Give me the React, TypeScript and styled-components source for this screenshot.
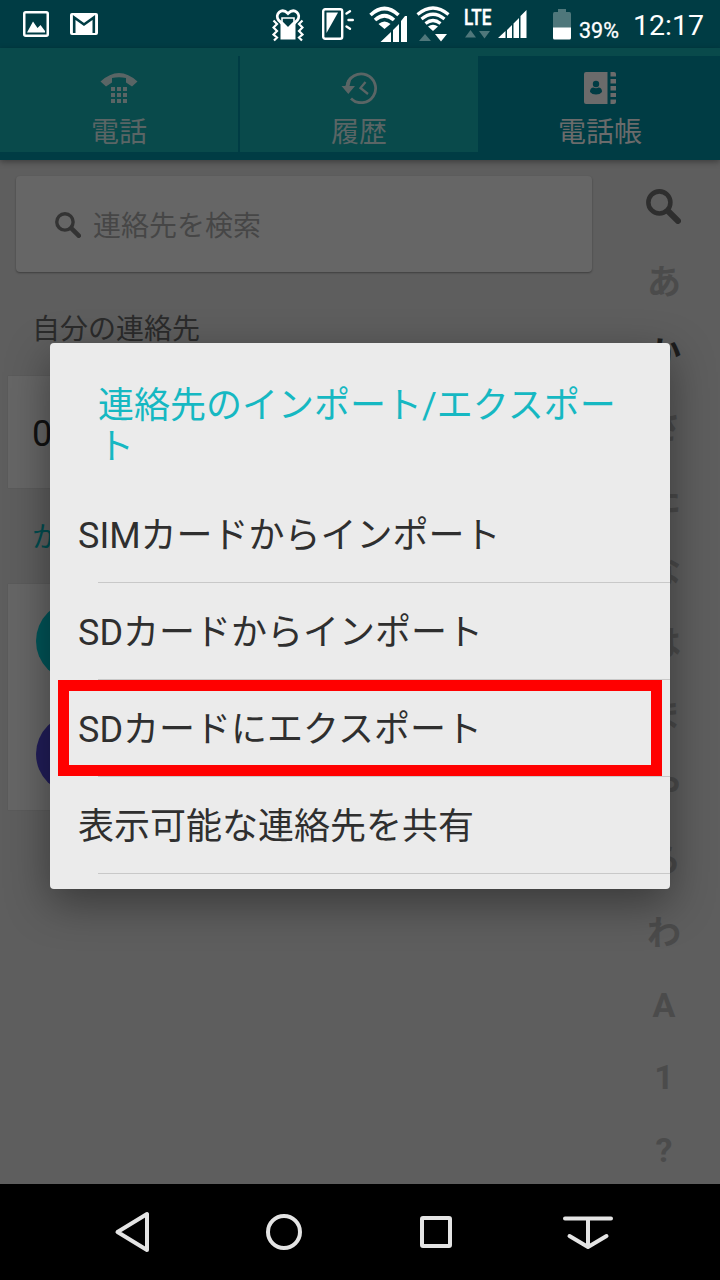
import React from 'react';
import styled, { createGlobalStyle } from 'styled-components';

const menuItems = [
    'SIMカードからインポート',
    'SDカードからインポート',
    'SDカードにエクスポート',
    '表示可能な連絡先を共有',
];

const kanaLetters = ['あ', 'か', 'さ', 'た', 'な', 'は', 'ま', 'や', 'ら', 'わ'];
const otherLetters = ['A', '1', '?'];

const StatusBar = () => (
    <Status>
        <StatusIcon width="26" height="26" viewBox="0 0 26 26" $left={23} $top={11}>
            <rect x="1.25" y="1.25" width="23.5" height="23.5" rx="1.5" stroke="#fff" strokeWidth="2.5" fill="none" />
            <path d="M4 21.5 L10 10.5 L14.5 17 L17.5 14 L22 20 V21.5 Z" fill="#fff" />
        </StatusIcon>
        <StatusIcon width="28" height="22" viewBox="0 0 28 22" $left={21} $top={13}>
            <rect width="28" height="22" rx="2" fill="#fff" />
            <path d="M4.2 20 V4.5 L14 11.5 L23.8 4.5 V20" stroke="#003c44" strokeWidth="2.6" fill="none" />
        </StatusIcon>
        <StatusIcon width="32" height="34" viewBox="0 0 32 34" $left={174} $top={8}>
            <path d="M8.5 15 H23.5 V31.5 H8.5 Z" fill="#fff" />
            <path d="M16 21.5 L6.5 12 C2.5 6 9.5 -1 16 5.5 C22.5 -1 29.5 6 25.5 12 Z" fill="#003c44" stroke="#fff" strokeWidth="2.8" />
            <path d="M10 10 H22 V14 L16 20 L10 14 Z" fill="#003c44" stroke="#fff" strokeWidth="1.6" />
            <path d="M1.5 12.5 L5 16 L1.5 19.5 L5 23 L1.5 26.5 L5 29.5 L2 32.5 M30.5 12.5 L27 16 L30.5 19.5 L27 23 L30.5 26.5 L27 29.5 L30 32.5" stroke="#fff" strokeWidth="2.2" fill="none" />
        </StatusIcon>
        <StatusIcon width="32" height="32" viewBox="0 0 32 32" $left={18} $top={8}>
            <rect x="1.2" y="1.2" width="19" height="29.6" rx="2" stroke="#fff" strokeWidth="2.4" fill="none" />
            <path d="M4.5 4.5 H16 L4.5 25 Z" fill="#fff" />
            <path d="M24.5 5.5 L28 3.2 M26.5 12 H30.8 M24.5 18.5 L28 20.8" stroke="#fff" strokeWidth="2.4" strokeLinecap="round" />
        </StatusIcon>
        <StatusIcon width="40" height="36" viewBox="0 0 40 36" $left={15} $top={6}>
            <path d="M1.5 9 Q15.5 -4 29.5 9 M6 14 Q15.5 5.5 25 14" stroke="#fff" strokeWidth="3.6" fill="none" />
            <path d="M9.5 18 Q15.5 13 21.5 18 L15.5 23 Z" fill="#fff" />
            <path d="M11.5 36 L22 26 V36 Z M24 24 L30 18 V36 H24 Z M32 15 L36 10 H38 V36 H32 Z" fill="#fff" />
        </StatusIcon>
        <StatusIcon width="34" height="36" viewBox="0 0 34 36" $left={7} $top={6}>
            <path d="M1.5 8.5 Q17 -4.5 32.5 8.5 M5.5 13 Q17 3.5 28.5 13 M9.5 17.5 Q17 11.5 24.5 17.5" stroke="#fff" strokeWidth="3.2" fill="none" />
            <path d="M12 20.5 Q17 17 22 20.5 L17 25 Z" fill="#fff" />
            <path d="M3 35 L9 28 L15 35 Z" fill="#4f777b" />
            <path d="M19 28 H31 L25 35.5 Z" fill="#fff" />
        </StatusIcon>
        <Lte>
            <span>LTE</span>
            <svg width="26" height="9" viewBox="0 0 26 9">
                <path d="M0 7.5 L5.5 0 L11 7.5 Z M14 1 H25 L19.5 8.5 Z" fill="#4f777b" />
            </svg>
        </Lte>
        <StatusIcon width="29" height="28" viewBox="0 0 29 28" $left={6} $top={10}>
            <path d="M0 28 L7.5 21 V28 Z M9 20 L14 15 V28 H9 Z M15.5 13.5 L21 8 V28 H15.5 Z M22.5 6 L28.5 0 V28 H22.5 Z" fill="#fff" />
        </StatusIcon>
        <StatusIcon width="20" height="32" viewBox="0 0 20 32" $left={25} $top={8}>
            <path d="M6 1 H14 V4 H17.5 Q19 4 19 6 V20 H1 V6 Q1 4 2.5 4 H6 Z" fill="#4f777b" />
            <path d="M1 19.5 H19 V30 Q19 31.5 17.5 31.5 H2.5 Q1 31.5 1 30 Z" fill="#fff" />
        </StatusIcon>
        <Percent>39%</Percent>
        <Clock>12:17</Clock>
    </Status>
);

const SearchIcon = ({ size, color }: { size: number; color: string }) => (
    <svg width={size} height={size} viewBox="0 0 34 34">
        <circle cx="13" cy="13" r="10.7" stroke={color} strokeWidth="4.4" fill="none" />
        <path d="M21.5 21.5 L31 31" stroke={color} strokeWidth="6" strokeLinecap="round" />
    </svg>
);

const App = () => {
    return (
        <Screen>
            <GlobalStyle />
            <StatusBar />
            <Tabs>
                <Tab $color="#5a6565">
                    <svg width="38" height="32" viewBox="0 0 38 32">
                        <path d="M.5 9.5 Q19 -7.5 37.5 9.5 L32 14.5 L26 10.5 V6 Q19 4.5 12 6 V10.5 L6 14.5 Z" fill="currentColor" />
                        <path d="M11 15h4v4h-4z M17 15h4v4h-4z M23 15h4v4h-4z M11 21h4v4h-4z M17 21h4v4h-4z M23 21h4v4h-4z M11 27h4v4h-4z M17 27h4v4h-4z M23 27h4v4h-4z" fill="currentColor" />
                    </svg>
                    <span>電話</span>
                </Tab>
                <Tab $color="#5a6565">
                    <svg width="38" height="32" viewBox="0 0 38 32">
                        <path d="M7 14 A14.4 14.4 0 1 1 11 26.5" stroke="currentColor" strokeWidth="2.8" fill="none" />
                        <path d="M1.5 14 H5.5 Q7 6 12 4 L9.5 14 H15 L8.3 22 Z" fill="currentColor" />
                        <path d="M25.5 10 L20.5 16 L28 22" stroke="currentColor" strokeWidth="2.3" fill="none" />
                    </svg>
                    <span>履歴</span>
                </Tab>
                <Tab $active $color="#6b6b6b">
                    <svg width="32" height="32" viewBox="0 0 32 32">
                        <path d="M2 0 H23.5 V32 H2 Q0 32 0 30 V2 Q0 0 2 0 Z" fill="currentColor" />
                        <circle cx="12" cy="12" r="3.2" fill="#003c44" />
                        <path d="M6 20 Q6 15.5 9.5 15.5 Q12 17 14.5 15.5 Q18 15.5 18 20 Q16 22.5 12 22.5 Q8 22.5 6 20 Z" fill="#003c44" />
                        <path d="M26.5 0h3.5q2 0 2 2v2.5h-5.5z M26.5 7h5.5v4.5h-5.5z M26.5 14h5.5v4.5h-5.5z M26.5 21h5.5v4h-5.5z M26.5 27.5h5.5v2.5q0 2-2 2h-3.5z" fill="currentColor" />
                    </svg>
                    <span>電話帳</span>
                </Tab>
            </Tabs>
            <Content>
                <ContactList>
                    <SearchBox>
                        <SearchIcon size={26} color="#333" />
                        <span>連絡先を検索</span>
                    </SearchBox>
                    <SectionTitle $color="#2b2b2b">自分の連絡先</SectionTitle>
                    <Card>
                        <OwnNumber>0</OwnNumber>
                    </Card>
                    <SectionTitle $color="#004d50">か</SectionTitle>
                    <Card>
                        <ContactRow><Avatar $color="#005458" /></ContactRow>
                        <ContactRow><Avatar $color="#211d59" /></ContactRow>
                    </Card>
                </ContactList>
                <IndexRail>
                    <RailItem $shift={0}><SearchIcon size={35} color="#2e2e2e" /></RailItem>
                    {kanaLetters.map((letter) => (
                        <RailItem key={letter} $shift={2} $current={letter === 'か'}>{letter}</RailItem>
                    ))}
                    {otherLetters.map((letter) => (
                        <RailItem key={letter} $shift={7}>{letter}</RailItem>
                    ))}
                </IndexRail>
            </Content>
            <NavBar>
                <svg width="36" height="42" viewBox="0 0 36 42">
                    <path d="M33 3 V39 L3.5 21 Z" />
                </svg>
                <svg width="40" height="40" viewBox="0 0 40 40">
                    <circle cx="20" cy="20" r="16" />
                </svg>
                <svg width="36" height="36" viewBox="0 0 36 36">
                    <rect x="4" y="4" width="28" height="28" rx="1" />
                </svg>
                <svg width="52" height="36" viewBox="0 0 52 36">
                    <path d="M3 4.5 H49 M26 4.5 V32 M7.5 22 L26 33 L44.5 22" />
                </svg>
            </NavBar>
            <Dialog>
                <DialogTitle>連絡先のインポート/エクスポート</DialogTitle>
                {menuItems.map((item) => (
                    <MenuItem key={item}>{item}</MenuItem>
                ))}
                <Highlight />
            </Dialog>
        </Screen>
    );
};

export default App;


const GlobalStyle = createGlobalStyle`
 * {
    box-sizing: border-box;
 }
 body {
    margin: 0;
    background: #5e5e5e;
    font-family: Roboto, "Noto Sans CJK JP", sans-serif;
 }
 svg {
    display: block;
    flex: none;
 }
`
const Screen = styled.div`
 position: relative;
 display: flex;
 flex-direction: column;
 width: 720px;
 height: 1280px;
 overflow: hidden;
`
const Status = styled.div`
 display: flex;
 align-items: flex-start;
 height: 48px;
 background: #003c44;
 color: #fff;
`
const StatusIcon = styled.svg<{ $left: number; $top: number }>`
 margin-left: ${({ $left }) => $left}px;
 margin-top: ${({ $top }) => $top}px;
`
const Lte = styled.div`
 width: 28px;
 margin: 6px 0 0 14px;

 span {
    display: block;
    height: 24px;
    font-size: 22px;
    line-height: 24px;
    font-weight: 500;
    -webkit-text-stroke: 0.4px #fff;
    transform: scaleX(0.78);
    transform-origin: left;
 }
 svg {
    margin-left: 1px;
 }
`
const Percent = styled.span`
 width: 54px;
 margin-left: 7px;
 font-size: 21.5px;
 line-height: 61px;
 -webkit-text-stroke: 0.3px #fff;
`
const Clock = styled.span`
 font-size: 28.5px;
 line-height: 51px;
`
const Tabs = styled.div`
 display: grid;
 grid-template-columns: 240px 238px 242px;
 height: 112px;
 border-top: 8px solid #094a4b;
 border-bottom: 8px solid #003c44;
 background: #003c44;
 box-shadow: 0 2px 6px rgba(0, 0, 0, 0.35);
 z-index: 1;
`
const Tab = styled.div<{ $active?: boolean; $color: string }>`
 display: flex;
 flex-direction: column;
 align-items: center;
 padding-top: 16px;
 padding-left: ${({ $active }) => ($active ? 2 : 0)}px;
 background: ${({ $active }) => ($active ? '#003c44' : '#094a4b')};
 color: ${({ $color }) => $color};
 font-size: 28px;
 line-height: 38px;

 &:first-child {
    border-right: 2px solid #003c44;
 }
 span {
    margin-top: 10px;
 }
`
const Content = styled.div`
 display: flex;
 height: 1024px;
 background: #5e5e5e;
`
const ContactList = styled.div`
 width: 608px;
 padding: 16px 16px 0 8px;
`
const SearchBox = styled.div`
 display: flex;
 align-items: center;
 height: 96px;
 margin-left: 8px;
 padding: 2px 0 0 39px;
 border-radius: 4px;
 background: #666;
 box-shadow: 0 1px 2px rgba(0, 0, 0, 0.35);
 color: #464646;
 font-size: 28px;

 span {
    margin: -2px 0 0 12px;
 }
`
const SectionTitle = styled.div<{ $color: string }>`
 height: 96px;
 padding-left: 24px;
 color: ${({ $color }) => $color};
 font-size: 28px;
 line-height: 100px;

 ${SearchBox} + & {
    height: 104px;
    line-height: 116px;
 }
`
const Card = styled.div`
 background: #666;
 box-shadow: 0 0 1px rgba(0, 0, 0, 0.2);
`
const OwnNumber = styled.div`
 height: 112px;
 padding-left: 24px;
 color: #111;
 font-size: 36px;
 line-height: 116px;
`
const ContactRow = styled.div`
 display: flex;
 align-items: center;
 height: 113px;
 padding-left: 28px;
`
const Avatar = styled.div<{ $color: string }>`
 width: 80px;
 height: 80px;
 border-radius: 50%;
 background: ${({ $color }) => $color};
`
const IndexRail = styled.div`
 display: flex;
 flex-direction: column;
 width: 112px;
 padding-top: 10px;
`
const RailItem = styled.div<{ $current?: boolean; $shift: number }>`
 display: flex;
 align-items: center;
 justify-content: center;
 height: 72.3px;
 padding-top: ${({ $shift }) => $shift}px;
 color: ${({ $current }) => ($current ? '#1d1d1d' : '#4b4b4b')};
 font-size: 34px;
 font-weight: bold;

 &:first-child {
    padding-right: 2px;
 }
`
const NavBar = styled.div`
 display: grid;
 grid-template-columns: repeat(4, 152px);
 justify-content: center;
 align-items: center;
 justify-items: center;
 height: 96px;
 background: #000;

 svg {
    fill: none;
    stroke: #e4e4e4;
    stroke-width: 4;
    stroke-linecap: round;
    stroke-linejoin: round;
 }
`
const Dialog = styled.div`
 position: absolute;
 top: 343px;
 left: 50px;
 z-index: 2;
 width: 620px;
 height: 546px;
 border-radius: 4px;
 background: #ebebeb;
 box-shadow: 0 14px 44px rgba(0, 0, 0, 0.4);
`
const DialogTitle = styled.div`
 height: 143px;
 padding: 43px 48px 0;
 color: #16b8c2;
 font-size: 36px;
 line-height: 41px;
`
const MenuItem = styled.div`
 height: 97px;
 padding: 2px 0 0 28px;
 color: #2f2f2f;
 font-size: 36px;
 line-height: 96px;

 &::after {
    content: '';
    display: block;
    height: 1px;
    margin: -2px 0 0 20px;
    background: #c8c8c8;
 }
`
const Highlight = styled.div`
 position: absolute;
 top: 337px;
 left: 8px;
 width: 604px;
 height: 96px;
 border: 11px solid #f00;
`
